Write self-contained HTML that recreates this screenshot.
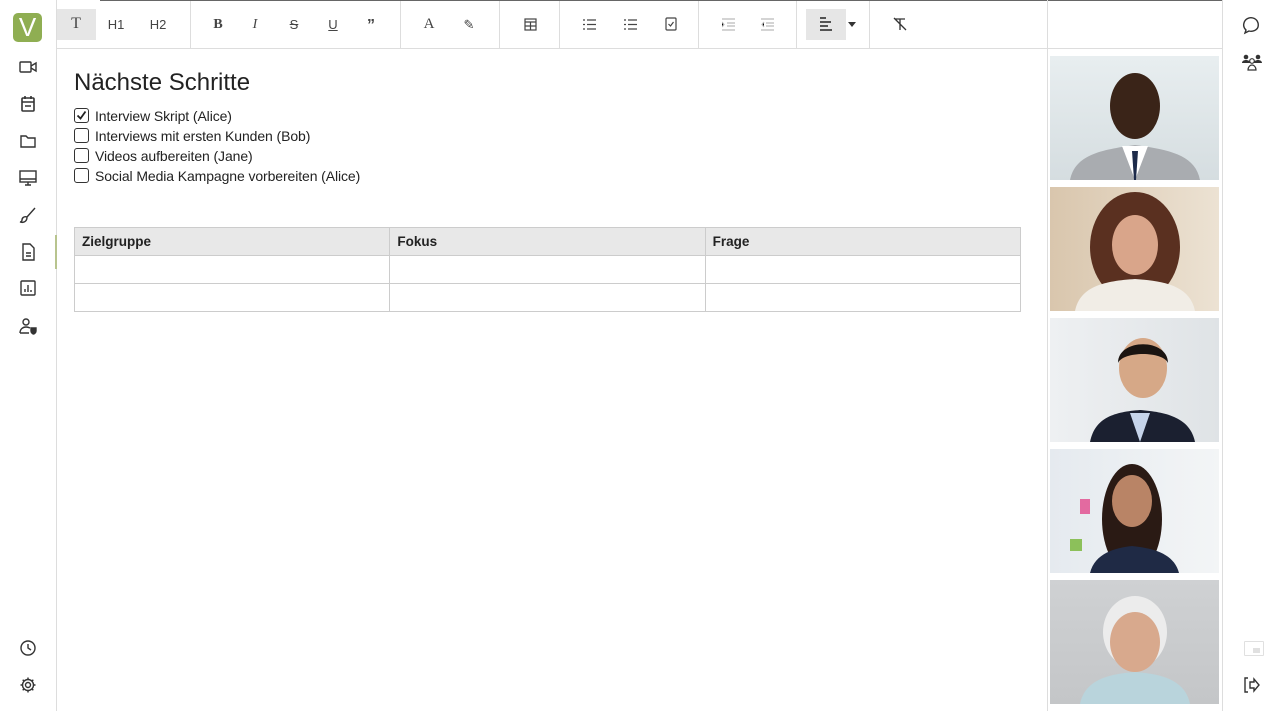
<!DOCTYPE html>
<html><head><meta charset="utf-8"><style>
*{box-sizing:border-box;margin:0;padding:0}
body{width:1280px;height:711px;overflow:hidden;background:#fff;font-family:"Liberation Sans",Roboto,sans-serif;color:#222;position:relative}
.left{position:absolute;left:0;top:0;width:57px;height:711px;border-right:1px solid #ddd}
.logo{position:absolute;left:13px;top:13px;width:29px;height:29px;background:#8fae52;border-radius:5px;color:#fff;font-size:26px;text-align:center;line-height:29px;font-weight:300}
.ic{position:absolute;left:18px;width:20px;height:20px}
.top{position:absolute;left:57px;top:0;width:990px;height:49px;border-bottom:1px solid #ddd}
.topline{position:absolute;left:100px;top:0;width:1122px;height:1px;background:#666}
.sep{position:absolute;top:0;width:1px;height:48px;background:#ddd}
.tb{position:absolute;top:17px;font-size:13px;line-height:15px;color:#444;text-align:center;width:20px}
.act{position:absolute;top:9px;height:31px;background:#e6e6e6}
.vid{position:absolute;left:1047px;top:0;width:176px;height:711px;border-left:1px solid #ddd;border-right:1px solid #ddd}
.vidtop{position:absolute;left:0;top:48px;width:175px;height:1px;background:#ddd}
.tile{position:absolute;left:2px;width:169px;height:124px;overflow:hidden}
h1{position:absolute;left:74px;top:69px;font-weight:400;font-size:24px;color:#222}
.cl{position:absolute;left:74px;font-size:14px;color:#222;letter-spacing:-0.1px}
.cb{display:inline-block;width:15px;height:15px;border:1.3px solid #333;border-radius:3px;vertical-align:-2px;margin-right:6px;position:relative}
table{position:absolute;left:74px;top:227px;width:947px;border-collapse:collapse}
td,th{border:1.5px solid #ccc;height:28px;text-align:left;font-size:13.5px;padding-left:7px;width:33.3%}
th{background:#e8e8e8;font-weight:700}
</style></head><body>
<div class="left">
<div class="logo">V</div>
<svg class="ic" style="top:57px" viewBox="0 0 20 20" fill="none" stroke="#333" stroke-width="1.4"><rect x="2" y="5" width="11" height="10" rx="1"/><path d="M13 9l5-3v8l-5-3"/></svg>
<svg class="ic" style="top:94px" viewBox="0 0 20 20" fill="none" stroke="#333" stroke-width="1.6"><rect x="4" y="4" width="12" height="13" rx="1"/><path d="M7 2v3M13 2v3M4 8h12M7 12h6"/></svg>
<svg class="ic" style="top:131px" viewBox="0 0 20 20" fill="none" stroke="#333" stroke-width="1.4"><path d="M3 5h5l2 2h7v9H3z"/></svg>
<svg class="ic" style="top:168px" viewBox="0 0 20 20" fill="none" stroke="#333" stroke-width="1.4"><rect x="2" y="3" width="16" height="11"/><path d="M2 11h16M7 17h6M10 14v3"/></svg>
<svg class="ic" style="top:205px" viewBox="0 0 20 20" fill="none" stroke="#333" stroke-width="1.4"><path d="M17 3l-8 9M9 12c-3-1-5 1-5 3 0 1-1 2-2 2 3 1 7 0 7-5z"/></svg>
<svg class="ic" style="top:242px" viewBox="0 0 20 20" fill="none" stroke="#333" stroke-width="1.4"><path d="M5 2h7l4 4v12H5z M8 11h5M8 14h5"/></svg>
<div style="position:absolute;left:55px;top:235px;width:2px;height:34px;background:#b8c48e"></div>
<svg class="ic" style="top:278px" viewBox="0 0 20 20" fill="none" stroke="#333" stroke-width="1.4"><rect x="3" y="3" width="14" height="14" rx="1"/><path d="M7 14v-3M10 14V7M13 14v-2"/></svg>
<svg class="ic" style="top:316px" viewBox="0 0 20 20" fill="none" stroke="#333" stroke-width="1.4"><circle cx="8" cy="6" r="3"/><path d="M2 17c0-4 3-6 6-6 2 0 3 .5 4 1M2 17h9"/><path d="M13 12h5v3c0 2-2 3-2.5 3S13 17 13 15z" fill="#333"/></svg>
<svg class="ic" style="top:638px" viewBox="0 0 20 20" fill="none" stroke="#333" stroke-width="1.4"><circle cx="10" cy="10" r="7"/><path d="M10 6v4l3 2"/></svg>
<svg class="ic" style="top:675px" viewBox="0 0 20 20" fill="none" stroke="#333" stroke-width="1.4"><circle cx="10" cy="10" r="2.5"/><path d="M10 2.5v2.5M10 15v2.5M2.5 10H5M15 10h2.5M4.7 4.7l1.8 1.8M13.5 13.5l1.8 1.8M4.7 15.3l1.8-1.8M13.5 6.5l1.8-1.8"/><circle cx="10" cy="10" r="5.5"/></svg>
</div>

<div class="top">
<div class="act" style="left:0;width:39px"></div>
<div class="tb" style="left:9px;font-family:'Liberation Serif';font-size:16px;top:16px">T</div>
<div class="tb" style="left:49px">H1</div>
<div class="tb" style="left:91px">H2</div>
<div class="sep" style="left:133px"></div>
<div class="tb" style="left:151px;font-family:'Liberation Serif';font-weight:bold;font-size:14px">B</div>
<div class="tb" style="left:188px;font-family:'Liberation Serif';font-style:italic;font-size:14px">I</div>
<div class="tb" style="left:227px;text-decoration:line-through">S</div>
<div class="tb" style="left:266px;text-decoration:underline">U</div>
<div class="tb" style="left:304px;font-weight:bold;font-size:16px;top:18px">”</div>
<div class="sep" style="left:343px"></div>
<div class="tb" style="left:362px;font-family:'Liberation Serif';font-size:15px">A</div>
<div class="tb" style="left:402px">✎</div>
<div class="sep" style="left:442px"></div>
<svg style="position:absolute;left:467px;top:18px" width="13" height="13" viewBox="0 0 13 13" fill="none" stroke="#444" stroke-width="1.2"><rect x="1" y="1" width="11" height="11"/><path d="M1 4h11M1 8h11M6.5 4v8"/></svg>
<div class="sep" style="left:502px"></div>
<svg style="position:absolute;left:526px;top:18px" width="13" height="13" viewBox="0 0 13 13" stroke="#444" stroke-width="1.3"><path d="M4 2h9M4 6.5h9M4 11h9M0 2h2M0 6.5h2M0 11h2"/></svg>
<svg style="position:absolute;left:567px;top:18px" width="13" height="13" viewBox="0 0 13 13" stroke="#444" stroke-width="1.3"><path d="M4 2h9M4 6.5h9M4 11h9M1 1v2M0 6.5h2M0 11h2"/></svg>
<svg style="position:absolute;left:608px;top:17px" width="12" height="14" viewBox="0 0 12 14" fill="none" stroke="#444" stroke-width="1.2"><rect x="1" y="1" width="10" height="12" rx="1"/><path d="M3.5 7l2 2 3-4"/></svg>
<div class="sep" style="left:641px"></div>
<svg style="position:absolute;left:665px;top:18px" width="13" height="13" viewBox="0 0 13 13" stroke="#bbb" stroke-width="1.2"><path d="M0 1h13M5 5h8M5 8h8M0 12h13M0 4l2 2.5L0 9"/></svg>
<svg style="position:absolute;left:704px;top:18px" width="13" height="13" viewBox="0 0 13 13" stroke="#bbb" stroke-width="1.2"><path d="M0 1h13M5 5h8M5 8h8M0 12h13M3 4L1 6.5 3 9"/></svg>
<div class="sep" style="left:739px"></div>
<div class="act" style="left:749px;width:40px"></div>
<svg style="position:absolute;left:762px;top:17px" width="14" height="14" viewBox="0 0 14 14" stroke="#222" stroke-width="1.5"><path d="M1 1h6M1 5h11M1 9h8M1 13h12"/></svg>
<div style="position:absolute;left:791px;top:22px;width:0;height:0;border-left:4px solid transparent;border-right:4px solid transparent;border-top:5px solid #333"></div>
<div class="sep" style="left:812px"></div>
<svg style="position:absolute;left:835px;top:17px" width="16" height="14" viewBox="0 0 16 14" fill="none" stroke="#333" stroke-width="1.3"><path d="M3 2h10M8 2v11M2 1l12 12"/></svg>
</div>
<div class="topline"></div>

<div class="vid">
<div class="vidtop"></div>
<div class="tile" style="top:56px;background:linear-gradient(#e8eef0,#d5dde0)"><svg width="169" height="124"><path d="M20 124c5-25 30-30 65-35 35 5 60 10 65 35z" fill="#a9acb0"/><path d="M72 90l13 34 13-34z" fill="#fff"/><path d="M82 95h6l-2 29h-2z" fill="#1d2b4a"/><ellipse cx="85" cy="50" rx="25" ry="33" fill="#3a2418"/></svg></div>
<div class="tile" style="top:187px;background:linear-gradient(90deg,#d9c6ad,#ece2d3)"><svg width="169" height="124"><ellipse cx="85" cy="60" rx="45" ry="55" fill="#5a3020"/><path d="M25 124c5-25 30-30 60-32 30 2 55 7 60 32z" fill="#f1ede6"/><ellipse cx="85" cy="58" rx="23" ry="30" fill="#d9a58a"/></svg></div>
<div class="tile" style="top:318px;background:linear-gradient(90deg,#eef0f2,#dfe3e6)"><svg width="169" height="124"><path d="M40 124c5-25 25-30 50-32 25 2 50 7 55 32z" fill="#1b2030"/><path d="M80 95l10 29 10-29z" fill="#c6d4ea"/><ellipse cx="93" cy="50" rx="24" ry="30" fill="#d6a887"/><path d="M68 45c0-25 50-25 50 0-5-12-45-12-50 0z" fill="#1a1411"/></svg></div>
<div class="tile" style="top:449px;background:linear-gradient(90deg,#e5eaef,#f3f5f6)"><svg width="169" height="124"><ellipse cx="82" cy="70" rx="30" ry="55" fill="#2a1a14"/><path d="M40 124c5-20 25-25 42-27 20 2 42 7 47 27z" fill="#1f2a45"/><ellipse cx="82" cy="52" rx="20" ry="26" fill="#b98466"/><rect x="30" y="50" width="10" height="15" fill="#e36aa0"/><rect x="20" y="90" width="12" height="12" fill="#8cc05a"/></svg></div>
<div class="tile" style="top:580px;background:linear-gradient(#cfd1d3,#c4c6c8)"><svg width="169" height="124"><path d="M30 124c5-25 30-30 55-32 25 2 50 7 55 32z" fill="#b9d4dc"/><ellipse cx="85" cy="52" rx="32" ry="36" fill="#ececec"/><ellipse cx="85" cy="62" rx="25" ry="30" fill="#d8a98d"/></svg></div>
</div>

<svg style="position:absolute;left:1242px;top:15px" width="20" height="20" viewBox="0 0 20 20" fill="none" stroke="#333" stroke-width="1.4"><path d="M4 15c-2-2-3-4-2-7 1-4 5-6 9-5 4 1 6 5 5 9-1 3-5 5-9 4l-4 2z"/></svg>
<svg style="position:absolute;left:1241px;top:52px" width="22" height="20" viewBox="0 0 22 20" fill="#333"><circle cx="5" cy="5" r="2.3"/><circle cx="17" cy="5" r="2.3"/><path d="M1 11c0-2 2-3 4-3s4 1 4 3zM13 11c0-2 2-3 4-3s4 1 4 3z"/><circle cx="11" cy="9" r="2.3" fill="none" stroke="#333" stroke-width="1.2"/><path d="M7 18c0-3 2-5 4-5s4 2 4 5z" fill="none" stroke="#333" stroke-width="1.2"/></svg>
<div style="position:absolute;left:1244px;top:641px;width:20px;height:15px;border:1.5px solid #e0e0e0;border-radius:1px"><div style="position:absolute;right:3px;bottom:2px;width:7px;height:5px;background:#e0e0e0"></div></div>
<svg style="position:absolute;left:1243px;top:676px" width="18" height="18" viewBox="0 0 18 18" fill="none" stroke="#333" stroke-width="1.4"><path d="M5 2H2v14h3M7 6h4V3l5 6-5 6v-3H7z"/></svg>

<h1>Nächste Schritte</h1>
<div class="cl" style="top:108px"><span class="cb"><svg style="position:absolute;left:1px;top:1px" width="11" height="11" viewBox="0 0 11 11" fill="none" stroke="#222" stroke-width="1.8"><path d="M1.5 5.5l3 3 5-7"/></svg></span>Interview Skript (Alice)</div>
<div class="cl" style="top:128px"><span class="cb"></span>Interviews mit ersten Kunden (Bob)</div>
<div class="cl" style="top:148px"><span class="cb"></span>Videos aufbereiten (Jane)</div>
<div class="cl" style="top:168px"><span class="cb"></span>Social Media Kampagne vorbereiten (Alice)</div>

<table><tr><th>Zielgruppe</th><th>Fokus</th><th>Frage</th></tr><tr><td></td><td></td><td></td></tr><tr><td></td><td></td><td></td></tr></table>
</body></html>
